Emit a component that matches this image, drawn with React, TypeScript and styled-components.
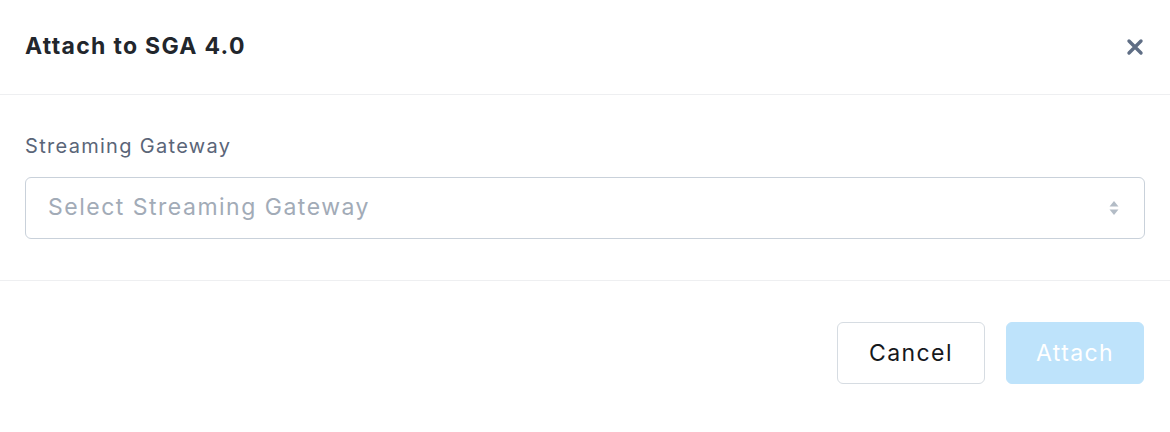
import React from "react";
import styled, { createGlobalStyle } from "styled-components";

const Global = createGlobalStyle`
  html, body { margin: 0; padding: 0; background: #ffffff; }
  body { font-family: Inter, "Noto Sans", sans-serif; }
  * { box-sizing: border-box; }
`;

const Dialog = styled.div`
  width: 1170px;
  height: 432px;
  background: #ffffff;
  display: flex;
  flex-direction: column;
`;

const Header = styled.header`
  height: 95px;
  padding: 0 25px;
  display: flex;
  align-items: center;
  justify-content: space-between;
  border-bottom: 1px solid #eeeff1;
`;

const Title = styled.h2`
  margin: 0;
  font-size: 23px;
  font-weight: 700;
  letter-spacing: 1.3px;
  color: #22262c;
  padding-bottom: 2px;
`;

const CloseButton = styled.button`
  border: 0;
  background: transparent;
  padding: 0;
  width: 20px;
  height: 20px;
  display: flex;
  align-items: center;
  justify-content: center;
  cursor: pointer;
`;

const Body = styled.div`
  padding: 39px 25px 41px;
  border-bottom: 1px solid #eeeff1;
  display: flex;
  flex-direction: column;
  gap: 18px;
`;

const Label = styled.label`
  font-size: 20px;
  line-height: 25px;
  letter-spacing: 1.3px;
  color: #5a6578;
`;

const Select = styled.div`
  height: 62px;
  border: 1px solid #c9d1da;
  border-radius: 6px;
  padding: 0 25px 0 22px;
  display: flex;
  align-items: center;
  justify-content: space-between;
`;

const Placeholder = styled.span`
  font-size: 23px;
  letter-spacing: 1.5px;
  color: #a2abb7;
  padding-bottom: 2px;
`;

const Footer = styled.footer`
  flex: 1;
  padding: 41px 26px 0 25px;
  display: flex;
  justify-content: flex-end;
  align-items: flex-start;
  gap: 21px;
`;

const Button = styled.button<{ $primary?: boolean }>`
  height: 62px;
  width: ${(p) => (p.$primary ? "138px" : "148px")};
  border-radius: 6px;
  font-family: Inter, "Noto Sans", sans-serif;
  font-size: 23px;
  letter-spacing: 1.4px;
  padding: 0 0 0;
  cursor: pointer;
  border: 1px solid ${(p) => (p.$primary ? "#bee3fb" : "#d6dce2")};
  background: ${(p) => (p.$primary ? "#bee3fb" : "#ffffff")};
  color: ${(p) => (p.$primary ? "#ffffff" : "#15181c")};
`;

export default function App() {
  return (
    <>
      <Global />
      <Dialog>
        <Header>
          <Title>Attach to SGA 4.0</Title>
          <CloseButton aria-label="Close">
            <svg width="18" height="18" viewBox="0 0 18 18">
              <path
                d="M3 3 L15 15 M15 3 L3 15"
                stroke="#5f6e85"
                strokeWidth="3.4"
                strokeLinecap="round"
              />
            </svg>
          </CloseButton>
        </Header>
        <Body>
          <Label>Streaming Gateway</Label>
          <Select>
            <Placeholder>Select Streaming Gateway</Placeholder>
            <svg width="10" height="16" viewBox="0 0 10 16">
              <path d="M5 1 L9.5 6.5 H0.5 Z" fill="#b3bcc6" />
              <path d="M5 15 L9.5 9.5 H0.5 Z" fill="#b3bcc6" />
            </svg>
          </Select>
        </Body>
        <Footer>
          <Button>Cancel</Button>
          <Button $primary>Attach</Button>
        </Footer>
      </Dialog>
    </>
  );
}
